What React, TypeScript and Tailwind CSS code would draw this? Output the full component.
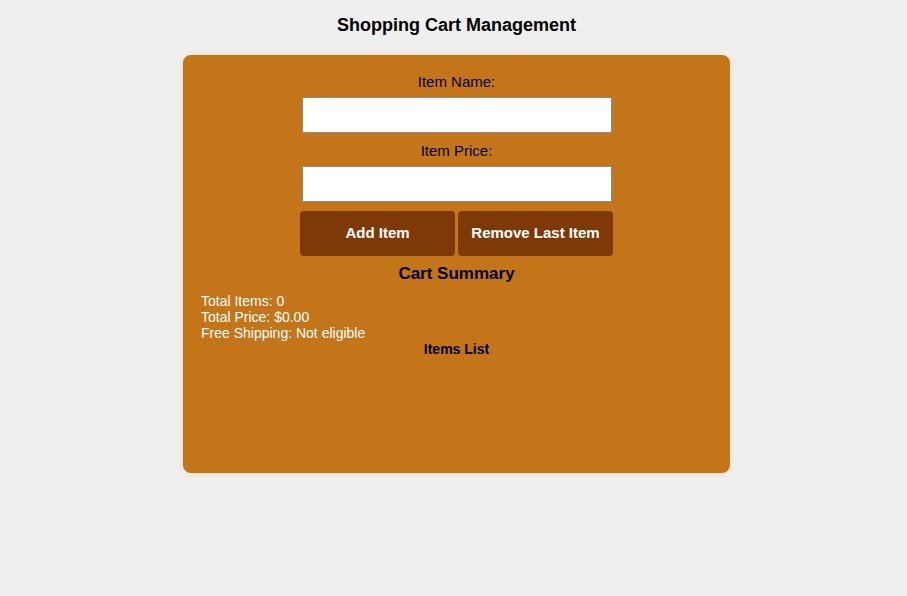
import { useState } from "react";

type Item = { name: string; price: number };

export default function App() {
  const [name, setName] = useState("");
  const [price, setPrice] = useState("");
  const [items, setItems] = useState<Item[]>([]);

  const total = items.reduce((sum, i) => sum + i.price, 0);

  const addItem = () => {
    const p = parseFloat(price);
    if (!name || isNaN(p)) return;
    setItems([...items, { name, price: p }]);
    setName("");
    setPrice("");
  };

  return (
    <div className="min-h-[596px] bg-[#efefef] pl-[6px] pt-[14px] font-['Liberation_Sans',Arial,sans-serif] text-black">
      <h1 className="text-center text-[18px] font-bold leading-[22px]">
        Shopping Cart Management
      </h1>

      {/* Cart Card */}
      <div className="mx-auto mt-[19px] h-[418px] w-[547px] rounded-[8px] bg-[#c4751a] px-[18px] pt-[18px] shadow-[0_0_6px_rgba(255,220,180,0.9)]">
        <div className="flex flex-col items-center">
          <label className="text-[15px] leading-[18px]">Item Name:</label>
          <input
            value={name}
            onChange={(e) => setName(e.target.value)}
            className="mt-[6px] h-[36px] w-[310px] border border-[#8a8a8a] bg-white px-2 text-[15px] outline-none"
          />
          <label className="mt-[9px] text-[15px] leading-[18px]">Item Price:</label>
          <input
            value={price}
            onChange={(e) => setPrice(e.target.value)}
            className="mt-[6px] h-[36px] w-[310px] border border-[#8a8a8a] bg-white px-2 text-[15px] outline-none"
          />
          <div className="mt-[9px] flex gap-[3px]">
            <button
              onClick={addItem}
              className="h-[45px] w-[155px] rounded-[4px] bg-[#7e3906] text-[15px] font-bold text-white"
            >
              Add Item
            </button>
            <button
              onClick={() => setItems(items.slice(0, -1))}
              className="h-[45px] w-[155px] rounded-[4px] bg-[#7e3906] text-[15px] font-bold text-white"
            >
              Remove Last Item
            </button>
          </div>
          <h2 className="mt-[8px] text-[17px] font-bold leading-[20px]">Cart Summary</h2>
        </div>

        <div className="mt-[9px] text-[14px] leading-[16px] text-white">
          <p>Total Items: {items.length}</p>
          <p>Total Price: ${total.toFixed(2)}</p>
          <p>Free Shipping: {total >= 50 ? "Eligible" : "Not eligible"}</p>
        </div>
        <h3 className="text-center text-[14px] font-bold leading-[16px]">Items List</h3>
        <ul className="text-center text-[14px] text-white">
          {items.map((item, idx) => (
            <li key={idx}>
              {item.name} - ${item.price.toFixed(2)}
            </li>
          ))}
        </ul>
      </div>
    </div>
  );
}
